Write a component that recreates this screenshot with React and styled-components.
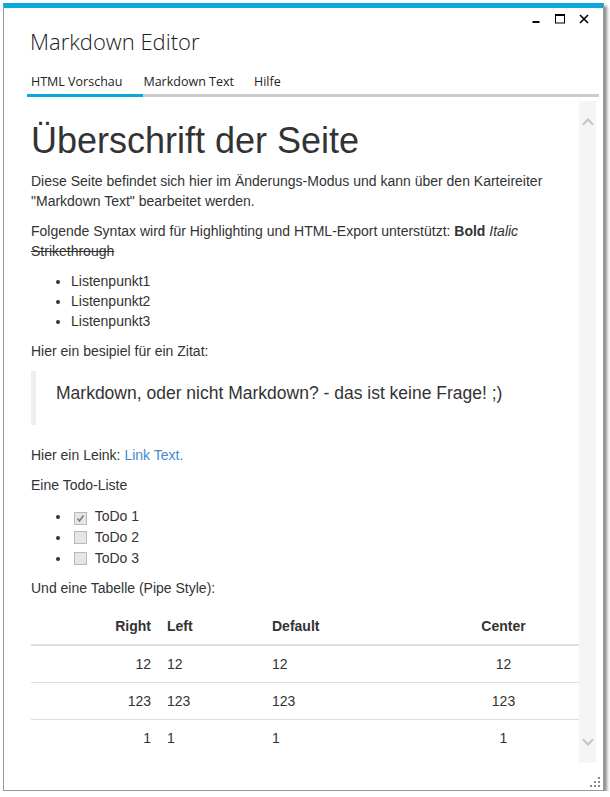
import React from 'react';
import styled, { createGlobalStyle } from 'styled-components';

const GlobalStyle = createGlobalStyle`
  html, body { margin: 0; padding: 0; background: #fff; }
  body { font-family: "Liberation Sans", Arial, sans-serif; }
  *, *::before, *::after { box-sizing: border-box; }
`;

const Window = styled.div`
  margin: 3px 0 0 3px;
  width: 601px;
  height: 788px;
  background: #fff;
  border: 1px solid #9a9a9a;
  border-top: 5px solid #0aa8dc;
  box-shadow: 3px 3px 3px rgba(0, 0, 0, 0.45);
  display: flex;
  flex-direction: column;
  padding: 0 4px 0 23px;
  overflow: hidden;
`;

const Controls = styled.div`
  display: flex;
  justify-content: flex-end;
  align-items: flex-start;
  height: 18px;
  padding-top: 6px;
  margin-right: 3px;
`;

const ControlButton = styled.div`
  width: 24px;
  height: 10px;
  display: flex;
  justify-content: center;
  align-items: flex-start;
  color: #000;
`;

const Title = styled.div`
  margin: 0 0 0 3px;
  font-family: "Open Sans", sans-serif;
  font-weight: 300;
  font-size: 22px;
  line-height: 30px;
  color: #1a1a1a;
`;

const TabStrip = styled.div`
  display: flex;
  margin-top: 16px;
  border-bottom: 3px solid #cccccc;
`;

const Tab = styled.div`
  font-family: "Open Sans", sans-serif;
  font-size: 12.5px;
  line-height: 20px;
  color: #222;
  padding: 0 20px 2px 0;
  margin-bottom: -3px;
  border-bottom: 3px solid ${p => (p.$active ? '#0aa8dc' : 'transparent')};
  &:first-child { padding-left: 4px; padding-right: 21px; }
`;

const ContentRow = styled.div`
  display: flex;
  margin-top: 4px;
  height: 662px;
  margin-right: 3px;
`;

const Document = styled.div`
  flex: 1;
  overflow: hidden;
  padding-left: 4px;
  color: #333;
  font-family: "Liberation Sans", Arial, sans-serif;
  font-size: 14px;
  line-height: 20px;
`;

const Scrollbar = styled.div`
  width: 17px;
  background: #f5f5f5;
  display: flex;
  flex-direction: column;
  justify-content: space-between;
  align-items: center;
  padding: 17px 0 17px;
`;

const Footer = styled.div`
  flex: 1;
  display: flex;
  justify-content: flex-end;
  align-items: flex-end;
  padding-bottom: 3px;
  margin-right: -1px;
`;

const H1 = styled.h1`
  font-size: 36px;
  font-weight: 400;
  line-height: 1.1;
  margin: 20px 0 10px;
  color: #333;
`;

const P = styled.p`
  margin: 0 0 10px;
`;

const List = styled.ul`
  margin: 0 0 10px;
  padding-left: 40px;
`;

const Item = styled.li`
  line-height: ${p => (p.$todo ? '19px' : '20px')};
  height: ${p => (p.$todo ? '21px' : 'auto')};
  padding-top: ${p => (p.$todo ? '2px' : '0')};
`;

const Quote = styled.blockquote`
  margin: 0 0 20px;
  padding: 10px 20px 9px;
  border-left: 5px solid #eeeeee;
  font-size: 17.5px;
  line-height: 25px;
  p { margin: 0 0 10px; }
`;

const Link = styled.a`
  color: #428bca;
  text-decoration: none;
`;

const Strike = styled.span`
  text-decoration: line-through;
`;

const Box = styled.span`
  display: inline-flex;
  align-items: center;
  justify-content: center;
  width: 13px;
  height: 13px;
  margin: 0 4px 0 3px;
  vertical-align: -2px;
  background: #e6e6e6;
  border: 1px solid #b9b9b9;
`;

const Table = styled.table`
  width: 100%;
  border-collapse: collapse;
  border-spacing: 0;
  table-layout: fixed;
  margin-bottom: 20px;
`;

const Th = styled.th`
  padding: 8px;
  line-height: 20px;
  text-align: ${p => p.$align || 'left'};
  font-weight: bold;
  border-bottom: 2px solid #dddddd;
  vertical-align: bottom;
`;

const Td = styled.td`
  padding: 8px;
  line-height: 20px;
  text-align: ${p => p.$align || 'left'};
  border-top: 1px solid #dddddd;
  vertical-align: top;
`;

const Chevron = ({ down }) => (
  <svg width="12" height="8" viewBox="0 0 12 8">
    <polyline
      points={down ? '1,1.5 6,6.5 11,1.5' : '1,6.5 6,1.5 11,6.5'}
      fill="none"
      stroke="#c4c4c4"
      strokeWidth="2"
    />
  </svg>
);

const Check = () => (
  <svg width="9" height="9" viewBox="0 0 9 9">
    <polyline points="1.5,4.5 3.5,7 7.5,1.5" fill="none" stroke="#7a7a7a" strokeWidth="1.5" />
  </svg>
);

const Grip = () => (
  <svg width="10" height="10" viewBox="0 0 10 10">
    <g fill="#8a8a8a">
      <rect x="8" y="0" width="2" height="2" />
      <rect x="4" y="4" width="2" height="2" />
      <rect x="8" y="4" width="2" height="2" />
      <rect x="0" y="8" width="2" height="2" />
      <rect x="4" y="8" width="2" height="2" />
      <rect x="8" y="8" width="2" height="2" />
    </g>
  </svg>
);

const cols = [
  { head: 'Right', align: 'right', w: 128 },
  { head: 'Left', align: 'left', w: 105 },
  { head: 'Default', align: 'left', w: 164 },
  { head: 'Center', align: 'center', w: 151 },
];
const rows = [
  ['12', '12', '12', '12'],
  ['123', '123', '123', '123'],
  ['1', '1', '1', '1'],
];

export default function App() {
  return (
    <>
      <GlobalStyle />
      <Window>
        <Controls>
          <ControlButton>
            <svg width="10" height="10" viewBox="0 0 10 10">
              <rect x="1.5" y="7" width="7" height="2" fill="#000" />
            </svg>
          </ControlButton>
          <ControlButton>
            <svg width="10" height="10" viewBox="0 0 10 10">
              <rect x="0.5" y="0.5" width="9" height="8.5" fill="none" stroke="#000" strokeWidth="1" />
              <rect x="0" y="0" width="10" height="2" fill="#000" />
            </svg>
          </ControlButton>
          <ControlButton>
            <svg width="10" height="10" viewBox="0 0 10 10">
              <line x1="1" y1="1" x2="9" y2="9" stroke="#000" strokeWidth="1.6" />
              <line x1="9" y1="1" x2="1" y2="9" stroke="#000" strokeWidth="1.6" />
            </svg>
          </ControlButton>
        </Controls>
        <Title>Markdown Editor</Title>
        <TabStrip>
          <Tab $active>HTML Vorschau</Tab>
          <Tab>Markdown Text</Tab>
          <Tab>Hilfe</Tab>
        </TabStrip>
        <ContentRow>
          <Document>
            <H1>Überschrift der Seite</H1>
            <P>
              Diese Seite befindet sich hier im Änderungs-Modus und kann über den Karteireiter
              "Markdown Text" bearbeitet werden.
            </P>
            <P>
              Folgende Syntax wird für Highlighting und HTML-Export unterstützt: <b>Bold</b>{' '}
              <i>Italic</i> <Strike>Strikethrough</Strike>
            </P>
            <List>
              <Item>Listenpunkt1</Item>
              <Item>Listenpunkt2</Item>
              <Item>Listenpunkt3</Item>
            </List>
            <P>Hier ein besipiel für ein Zitat:</P>
            <Quote>
              <p>Markdown, oder nicht Markdown? - das ist keine Frage! ;)</p>
            </Quote>
            <P>
              Hier ein Leink: <Link href="#">Link Text.</Link>
            </P>
            <P>Eine Todo-Liste</P>
            <List>
              <Item $todo>
                <Box><Check /></Box> ToDo 1
              </Item>
              <Item $todo>
                <Box /> ToDo 2
              </Item>
              <Item $todo>
                <Box /> ToDo 3
              </Item>
            </List>
            <P>Und eine Tabelle (Pipe Style):</P>
            <Table>
              <colgroup>
                {cols.map(c => (
                  <col key={c.head} style={{ width: c.w }} />
                ))}
              </colgroup>
              <thead>
                <tr>
                  {cols.map(c => (
                    <Th key={c.head} $align={c.align}>{c.head}</Th>
                  ))}
                </tr>
              </thead>
              <tbody>
                {rows.map((r, i) => (
                  <tr key={i}>
                    {r.map((v, j) => (
                      <Td key={j} $align={cols[j].align}>{v}</Td>
                    ))}
                  </tr>
                ))}
              </tbody>
            </Table>
          </Document>
          <Scrollbar>
            <Chevron />
            <Chevron down />
          </Scrollbar>
        </ContentRow>
        <Footer>
          <Grip />
        </Footer>
      </Window>
    </>
  );
}
